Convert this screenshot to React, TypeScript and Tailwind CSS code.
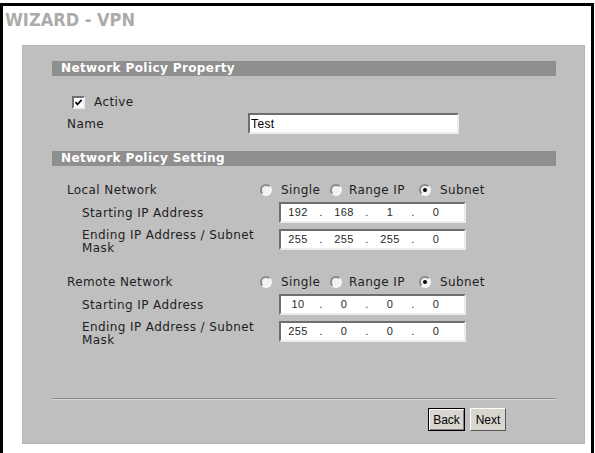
import { Fragment, type ReactNode } from 'react';

const verdana = "font-['DejaVu_Sans',Verdana,sans-serif] tracking-[0.4px]";
const arial = "font-['Liberation_Sans',Arial,sans-serif]";

function Inset({ className = '', children }: { className?: string; children?: ReactNode }) {
  return (
    <div
      className={`flex h-[21px] items-center border-2 border-t-[#6e6e6e] border-l-[#6e6e6e] border-b-[#ececec] border-r-[#ececec] bg-white ${className}`}
    >
      {children}
    </div>
  );
}

function IpField({ octets }: { octets: string[] }) {
  return (
    <Inset className={`w-[187px] ${arial} text-[11px] text-[#2a2a2a]`}>
      {octets.map((o, i) => (
        <Fragment key={i}>
          {i > 0 && <span className="w-[12px] text-center">.</span>}
          <span className="w-[34px] text-center">{o}</span>
        </Fragment>
      ))}
    </Inset>
  );
}

function Radio({ checked = false }: { checked?: boolean }) {
  return (
    <span className="relative inline-block h-[12px] w-[12px] shrink-0 rounded-full border-2 border-t-[#8a8a8a] border-l-[#8a8a8a] border-b-[#f6f6f6] border-r-[#f6f6f6] bg-[#f2f2f2]">
      {checked && <span className="absolute left-[2px] top-[2px] h-[4px] w-[4px] rounded-full bg-black" />}
    </span>
  );
}

function SectionBar({ title }: { title: string }) {
  return (
    <div className={`h-[15px] bg-[#8f8f8f] pl-[9px] text-[12px] font-bold leading-[15px] text-white ${verdana}`}>
      {title}
    </div>
  );
}

function NetworkBlock({ label, start, end }: { label: string; start: string[]; end: string[] }) {
  return (
    <>
      <div className={`flex h-[18px] items-center text-[12px] text-[#1e1e1e] ${verdana}`}>
        <span className="w-[208px] pl-[15px]">{label}</span>
        <span className="flex w-[70px] items-center">
          <Radio />
          <span className="ml-[9px]">Single</span>
        </span>
        <span className="flex w-[89px] items-center">
          <Radio />
          <span className="ml-[7px]">Range IP</span>
        </span>
        <span className="flex items-center">
          <Radio checked />
          <span className="ml-[9px]">Subnet</span>
        </span>
      </div>
      <div className={`mt-[3px] flex h-[21px] items-center text-[12px] text-[#1e1e1e] ${verdana}`}>
        <span className="w-[227px] pl-[30px]">Starting IP Address</span>
        <IpField octets={start} />
      </div>
      <div className={`mt-[6px] flex items-start text-[12px] leading-[13px] text-[#1e1e1e] ${verdana}`}>
        <span className="w-[227px] pl-[30px]">
          <span className="block w-[185px]">Ending IP Address / Subnet Mask</span>
        </span>
        <IpField octets={end} />
      </div>
    </>
  );
}

export default function App() {
  return (
    <div className="h-[453px] w-[595px] overflow-hidden bg-white pt-[3px]">
      <div className="h-[450px] w-[594px] border-x-[3px] border-t-[3px] border-black">
        <h1 className="pl-[2px] pt-[4px] font-['DejaVu_Sans_Condensed','DejaVu_Sans',sans-serif] text-[18px] font-bold leading-[20px] text-[#ababab]">
          WIZARD - VPN
        </h1>
        <div className="ml-[19px] mt-[15px] h-[399px] w-[563px] border border-[#b6b6b6] bg-[#c0bfc0] pl-[29px] pr-[28px] pt-[15px]">
          <SectionBar title="Network Policy Property" />

          <div className={`mt-[18px] flex h-[16px] items-center pl-[20px] text-[12px] text-[#1e1e1e] ${verdana}`}>
            <span className="flex h-[13px] w-[13px] items-center justify-center border-2 border-t-[#6e6e6e] border-l-[#6e6e6e] border-b-[#ececec] border-r-[#ececec] bg-white">
              <svg width="9" height="9" viewBox="0 0 9 9">
                <polyline points="1.5,4.2 3.5,6.5 7.6,1.8" fill="none" stroke="#000" strokeWidth="1.8" />
              </svg>
            </span>
            <span className="ml-[9px]">Active</span>
          </div>

          <div className={`mt-[3px] flex h-[21px] items-center text-[12px] text-[#1e1e1e] ${verdana}`}>
            <span className="w-[196px] pl-[15px]">Name</span>
            <Inset className={`w-[211px] pl-[1px] ${arial} text-[12px] text-black`}>Test</Inset>
          </div>

          <div className="mt-[17px]">
            <SectionBar title="Network Policy Setting" />
          </div>

          <div className="mt-[15px]">
            <NetworkBlock label="Local Network" start={['192', '168', '1', '0']} end={['255', '255', '255', '0']} />
          </div>
          <div className="mt-[18px]">
            <NetworkBlock label="Remote Network" start={['10', '0', '0', '0']} end={['255', '0', '0', '0']} />
          </div>

          <div className="mt-[51px] border-t border-b border-t-[#8a8a8a] border-b-[#d6d6d6]" />

          <div className={`mt-[8px] flex justify-end gap-[5px] pr-[50px] ${arial} text-[12px] text-black`}>
            <button className="h-[23px] w-[37px] border border-black bg-[#d9d6d0] shadow-[inset_1px_1px_0_#ffffff,inset_-1px_-1px_0_#808080]">
              Back
            </button>
            <button className="h-[23px] w-[36px] border border-t-white border-l-white border-b-[#555] border-r-[#555] bg-[#d9d6d0]">
              Next
            </button>
          </div>
        </div>
      </div>
    </div>
  );
}
